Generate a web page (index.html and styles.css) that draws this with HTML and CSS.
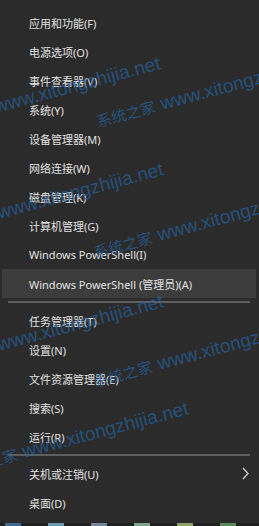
FILE: index.html
```html
<!DOCTYPE html>
<html>
<head>
    <title>Win+X Menu</title>
    <link rel="stylesheet" href="styles.css">
</head>
<body>
    <div class="screen">
        <ul class="menu">
            <li class="item">应用和功能(F)</li>
            <li class="item">电源选项(O)</li>
            <li class="item">事件查看器(V)</li>
            <li class="item">系统(Y)</li>
            <li class="item">设备管理器(M)</li>
            <li class="item">网络连接(W)</li>
            <li class="item">磁盘管理(K)</li>
            <li class="item">计算机管理(G)</li>
            <li class="item">Windows PowerShell(I)</li>
            <li class="item active">Windows PowerShell (管理员)(A)</li>
            <li class="sep"></li>
            <li class="item">任务管理器(T)</li>
            <li class="item">设置(N)</li>
            <li class="item">文件资源管理器(E)</li>
            <li class="item">搜索(S)</li>
            <li class="item">运行(R)</li>
            <li class="sep"></li>
            <li class="item">关机或注销(U)
                <svg class="chev" width="7" height="13" viewBox="0 0 7 13">
                    <path d="M1 1 L6 6.5 L1 12" fill="none" stroke="#cfcfcf" stroke-width="1.3"/>
                </svg>
            </li>
            <li class="item">桌面(D)</li>
        </ul>
        <div class="taskbar">
            <span class="tb-icon c1"></span>
            <span class="tb-icon c2"></span>
            <span class="tb-icon c3"></span>
            <span class="tb-icon c4"></span>
            <span class="tb-icon c5"></span>
            <span class="tb-icon c6"></span>
        </div>

        <!-- watermark over the screenshot -->
        <div class="watermarks">
            <span class="wm wm-a1">www.xitongzhijia.net<i>系统之家</i></span>
            <span class="wm wm-a2">www.xitongzhijia.net<i>系统之家</i></span>
            <span class="wm wm-b1">www.xitongzhijia.net<i>系统之家</i></span>
            <span class="wm wm-b2">www.xitongzhijia.net<i>系统之家</i></span>
            <span class="wm wm-c1">www.xitongzhijia.net<i>系统之家</i></span>
            <span class="wm wm-c2">www.xitongzhijia.net<i>系统之家</i></span>
            <span class="wm wm-d1">www.xitongzhijia.net<i>系统之家</i></span>
        </div>
    </div>
</body>
</html>
```

FILE: styles.css
```css
body {
    margin: 0;
    background-color: #2b2b2b;
    font-family: "Noto Sans", "Noto Sans CJK SC", sans-serif;
}

.screen {
    position: relative;
    width: 259px;
    height: 526px;
    overflow: hidden;
    display: flex;
    flex-direction: column;
}

.menu {
    flex: 1;
    list-style: none;
    margin: 0;
    padding: 8px 0 0 0;
}

.item {
    height: 29px;
    display: flex;
    align-items: center;
    margin: 0 3px 0 2px;
    padding: 0 7px 0 27px;
    font-size: 11px;
    color: #e2e2e2;
}

.item.active {
    background-color: #3c3c3c;
}

.chev {
    margin-left: auto;
}

.sep {
    height: 2px;
    margin: 3px 9px 3px 8px;
    background-color: #5e5e5e;
}

.taskbar {
    height: 3px;
    display: flex;
    gap: 27px;
    padding-left: 5px;
    background-color: #202020;
}

.tb-icon {
    width: 16px;
    height: 3px;
}

.c1 { background-color: #41698f; }
.c2 { background-color: #6f97b0; }
.c3 { background-color: #74869a; }
.c4 { background-color: #7ea487; }
.c5 { background-color: #8aa266; }
.c6 { background-color: #578a56; }

.watermarks {
    position: absolute;
    top: 0;
    left: 0;
    right: 0;
    bottom: 0;
    pointer-events: none;
}

.wm {
    position: absolute;
    font-family: "Liberation Sans", "Noto Sans CJK SC", sans-serif;
    font-size: 19px;
    line-height: 1;
    color: rgba(36, 98, 160, 0.7);
    white-space: nowrap;
    transform-origin: 0 100%;
    transform: rotate(-15deg);
}

.wm i {
    position: absolute;
    right: 100%;
    bottom: 1px;
    margin-right: 6px;
    font-style: normal;
    font-size: 15px;
}

.wm-a1 { left: -3px; top: 97px; }
.wm-a2 { left: 163px; top: 94px; }
.wm-b1 { left: 0; top: 203px; }
.wm-b2 { left: 160px; top: 225px; }
.wm-c1 { left: 0; top: 335px; }
.wm-c2 { left: 160px; top: 354px; }
.wm-d1 { left: 25px; top: 442px; }
```
